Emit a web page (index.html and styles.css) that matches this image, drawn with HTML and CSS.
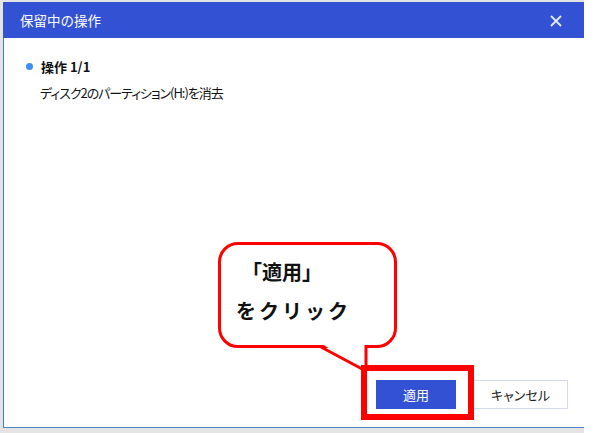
FILE: index.html
```html
<!DOCTYPE html>
<html lang="ja">
<head>
  <meta charset="UTF-8" />
  <title>保留中の操作</title>
  <link rel="stylesheet" href="styles.css">
</head>
<body>
  <div class="desk">
    <div class="dialog">
      <div class="header">
        <span class="title">保留中の操作</span>
        <svg class="close" width="12" height="12" viewBox="0 0 12 12">
          <path d="M1 1 L11 11 M11 1 L1 11" stroke="#e3e9fb" stroke-width="1.8" fill="none"/>
        </svg>
      </div>

      <div class="body">
        <div class="op">
          <span class="dot"></span>
          <span class="op-title">操作 1/1</span>
        </div>
        <div class="op-desc">ディスク2のパーティション(H:)を消去</div>

        <div class="footer">
          <button class="btn primary">適用</button>
          <button class="btn">キャンセル</button>
        </div>
      </div>
    </div>

    <!-- annotation overlay -->
    <div class="bubble">
      <div class="bubble-line">「適用」</div>
      <div class="bubble-line wide">をクリック</div>
    </div>
    <svg class="tail" width="56" height="34" viewBox="316 340 56 34">
      <polygon points="322,344 366,344 366,367 363,369" fill="#fff"/>
      <path d="M321 347 L364 370 M366 345 L366 367" stroke="#ff0000" stroke-width="3" fill="none"/>
    </svg>
    <div class="mark"></div>
  </div>
</body>
</html>
```

FILE: styles.css
```css
html, body {
  margin: 0;
  padding: 0;
  background: #fff;
}

body {
  font-family: "Noto Sans CJK JP", "Noto Sans", sans-serif;
  color: #222;
}

.desk {
  position: relative;
  width: 584px;
  height: 433px;
  padding: 2px 0 0 3px;
  box-sizing: border-box;
  background: #e4e4e4;
}

.dialog {
  display: flex;
  flex-direction: column;
  height: 426px;
  background: white;
}

.header {
  display: flex;
  align-items: center;
  justify-content: space-between;
  height: 36px;
  padding: 0 22px 0 17px;
  background: #3352d3;
  color: white;
}

.title {
  font-size: 13.5px;
  line-height: 1;
  padding-top: 1px;
}

.close {
  display: block;
  margin-top: 1px;
}

.body {
  flex: 1;
  display: flex;
  flex-direction: column;
  border-left: 1px solid #2f80d8;
  border-bottom: 1px solid #4a84c4;
  padding: 19px 16px 18px 22px;
}

.op {
  display: flex;
  align-items: center;
  gap: 8px;
  height: 18px;
}

.dot {
  width: 7px;
  height: 7px;
  border-radius: 50%;
  background: #3d8ef5;
  margin-top: 1px;
}

.op-title {
  font-size: 13px;
  font-weight: bold;
  color: #111;
}

.op-desc {
  margin: 8px 0 0 14px;
  font-size: 13px;
  font-feature-settings: "palt";
  letter-spacing: -1.05px;
  color: #111;
}

.footer {
  margin-top: auto;
  display: flex;
  justify-content: flex-end;
  gap: 17px;
}

.btn {
  height: 29px;
  width: 95px;
  border: 1px solid #d6dbea;
  background: white;
  color: #222;
  font-family: inherit;
  font-size: 13px;
  font-feature-settings: "palt";
  padding: 0;
}

.btn.primary {
  width: 80px;
  border-color: #3352d3;
  background: #3352d3;
  color: white;
}

.bubble {
  position: absolute;
  left: 218px;
  top: 242px;
  width: 179px;
  height: 106px;
  box-sizing: border-box;
  border: 3px solid #ff0000;
  border-radius: 20px;
  background: white;
  padding: 14px 0 0 15px;
}

.bubble-line {
  font-size: 20px;
  font-weight: bold;
  color: #111;
  line-height: 26px;
  margin-left: 6px;
}

.bubble-line.wide {
  margin-top: 13px;
  letter-spacing: 3px;
  margin-left: 0;
}

.tail {
  position: absolute;
  left: 316px;
  top: 340px;
}

.mark {
  position: absolute;
  left: 361px;
  top: 365px;
  width: 113px;
  height: 55px;
  box-sizing: border-box;
  border: 6px solid #ff0000;
}
```
